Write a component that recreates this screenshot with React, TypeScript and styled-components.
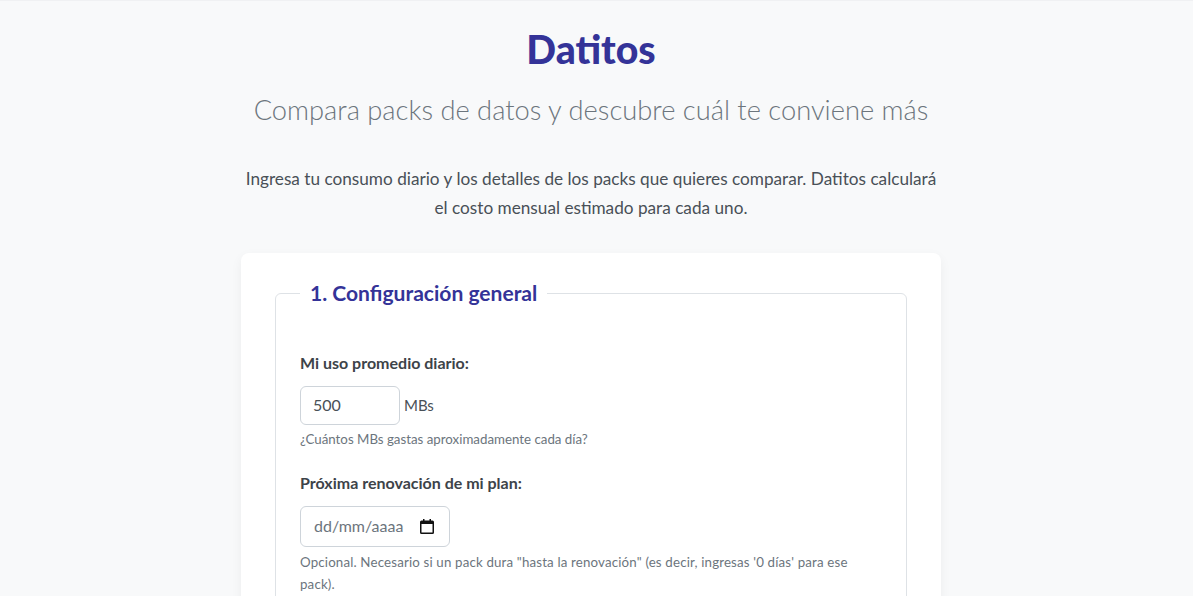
import React from "react";
import styled, { createGlobalStyle } from "styled-components";

const Global = createGlobalStyle`
  html, body { margin: 0; padding: 0; height: 596px; overflow: hidden; }
  body { background: #f8f9fa; font-family: "Lato", "Liberation Sans", sans-serif; color: #343a40; }
  * { box-sizing: border-box; }
`;

const Page = styled.div`
  height: 596px;
  overflow: hidden;
  border-top: 1px solid #f0f1f3;
  padding: 0 11px 0 0;
`;
const Container = styled.main`
  width: 700px;
  margin: 0 auto;
  display: flex;
  flex-direction: column;
`;
const Title = styled.h1`
  margin: 23px 0 0;
  font-size: 39.2px;
  line-height: 50px;
  font-weight: 900;
  color: #343398;
  text-align: center;
`;
const Subtitle = styled.p`
  margin: 18px 0 0;
  font-size: 27.3px;
  line-height: 36px;
  font-weight: 300;
  color: #6c757d;
  text-align: center;
  white-space: nowrap;
`;
const Intro = styled.p`
  margin: 36px 0 0;
  font-size: 17.2px;
  line-height: 29px;
  color: #495057;
  text-align: center;
`;
const Card = styled.section`
  margin-top: 31px;
  background: #fff;
  border-radius: 8px;
  box-shadow: 0 4px 12px rgba(0, 0, 0, 0.05);
  padding: 27px 34px 34px;
`;
const Fieldset = styled.fieldset`
  margin: 0;
  border: 1px solid #dee2e6;
  border-radius: 6px;
  padding: 24px 24px 24px;
`;
const Legend = styled.legend`
  padding: 0 10px 2px;
  font-size: 21.05px;
  line-height: 25px;
  font-weight: 700;
  color: #343398;
`;
const Group = styled.div<{ $first?: boolean }>`
  margin-top: ${(p) => (p.$first ? "20px" : "0")};
  margin-bottom: 21px;
`;
const Label = styled.label`
  display: block;
  margin-bottom: 11px;
  font-size: 16px;
  line-height: 24px;
  font-weight: 700;
  color: #3d4349;
`;
const InputRow = styled.div`
  display: flex;
  align-items: center;
  gap: 4px;
`;
const NumberInput = styled.input`
  width: 100px;
  height: 39px;
  padding: 0 12px 2px;
  border: 1px solid #ced4da;
  border-radius: 6px;
  background: #fff;
  font: 400 16px "Lato", sans-serif;
  color: #495057;
  outline: none;
`;
const Unit = styled.span`
  padding-bottom: 2px;
  font-size: 15px;
  color: #495057;
`;
const DateBox = styled.div`
  width: 150px;
  height: 41px;
  padding: 0 15px 0 13px;
  border: 1px solid #ced4da;
  border-radius: 6px;
  background: #fff;
  display: flex;
  align-items: center;
  justify-content: space-between;
`;
const DateText = styled.span`
  padding-bottom: 2px;
  font-size: 16px;
  color: #6c757d;
`;
const Hint = styled.small<{ $wide?: boolean }>`
  display: block;
  margin-top: ${(p) => (p.$wide ? "4px" : "3px")};
  max-width: 560px;
  font-size: 13.3px;
  line-height: 22px;
  letter-spacing: ${(p) => (p.$wide ? "0.16px" : "0")};
  color: #6c757d;
`;

export default function App() {
  return (
    <Page>
      <Global />
      <Container>
        <Title>Datitos</Title>
        <Subtitle>Compara packs de datos y descubre cuál te conviene más</Subtitle>
        <Intro>
          Ingresa tu consumo diario y los detalles de los packs que quieres comparar. Datitos calculará el costo mensual estimado para cada uno.
        </Intro>
        <Card>
          <Fieldset>
            <Legend>1. Configuración general</Legend>
            <Group $first>
              <Label htmlFor="uso">Mi uso promedio diario:</Label>
              <InputRow>
                <NumberInput id="uso" type="text" defaultValue="500" />
                <Unit>MBs</Unit>
              </InputRow>
              <Hint>¿Cuántos MBs gastas aproximadamente cada día?</Hint>
            </Group>
            <Group>
              <Label>Próxima renovación de mi plan:</Label>
              <DateBox>
                <DateText>dd/mm/aaaa</DateText>
                <svg width="14" height="15" viewBox="0 0 14 15" aria-hidden="true">
                  <path d="M3 0v1.5H1.5A1.5 1.5 0 0 0 0 3v10.5A1.5 1.5 0 0 0 1.5 15h11a1.5 1.5 0 0 0 1.5-1.5V3a1.5 1.5 0 0 0-1.5-1.5H11V0H9.5v1.5h-5V0H3zM1.5 5h11v8.5h-11V5z" fill="#111" />
                </svg>
              </DateBox>
              <Hint $wide>Opcional. Necesario si un pack dura "hasta la renovación" (es decir, ingresas '0 días' para ese pack).</Hint>
            </Group>
          </Fieldset>
        </Card>
      </Container>
    </Page>
  );
}
